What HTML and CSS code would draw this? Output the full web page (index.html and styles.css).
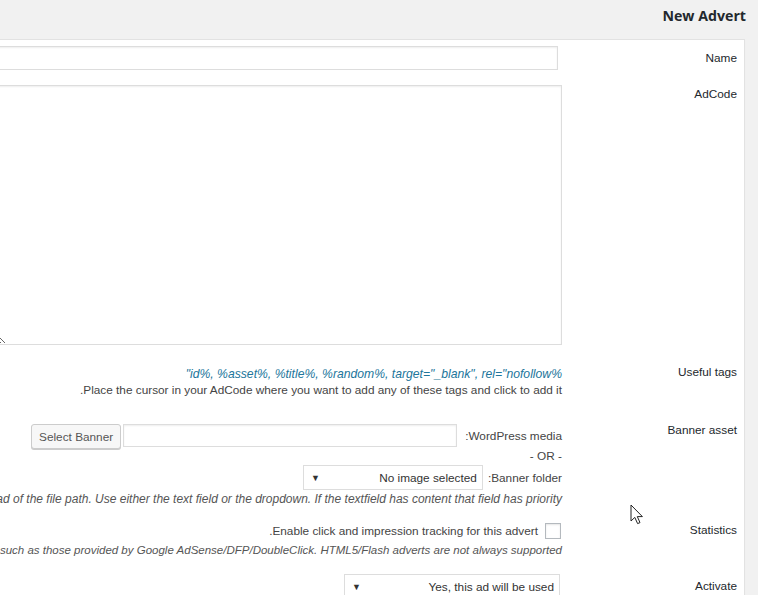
FILE: index.html
```html
<!DOCTYPE html>
<html lang="en" dir="rtl">
<head>
<meta charset="utf-8">
<title>New Advert</title>
<link rel="stylesheet" href="styles.css">
</head>
<body>
<div class="wrap">
  <h2 class="title">New Advert</h2>
  <div class="panel">
    <div class="row row-name">
      <div class="label">Name</div>
      <div class="field"><input class="text name-input" type="text"></div>
    </div>
    <div class="row row-code">
      <div class="label">AdCode</div>
      <div class="field"><textarea class="code"></textarea></div>
    </div>
    <div class="row row-tags">
      <div class="label">Useful tags</div>
      <div class="field">
        <div class="tags">%id%, %asset%, %title%, %random%, target="_blank", rel="nofollow"</div>
        <div class="line">Place the cursor in your AdCode where you want to add any of these tags and click to add it.</div>
      </div>
    </div>
    <div class="row row-banner">
      <div class="label">Banner asset</div>
      <div class="field">
        <div class="media-line">
          <span class="inline-label">WordPress media:</span>
          <input class="text media-input" type="text">
          <button class="button" type="button">Select Banner</button>
        </div>
        <div class="or">- OR -</div>
        <div class="folder-line">
          <span class="inline-label">Banner folder:</span>
          <div class="select folder-select"><span>No image selected</span><span class="arrow">▼</span></div>
        </div>
        <div class="desc desc-banner">Use %asset% in the adcode instead of the file path. Use either the text field or the dropdown. If the textfield has content that field has priority.</div>
      </div>
    </div>
    <div class="row row-stats">
      <div class="label">Statistics</div>
      <div class="field">
        <div class="check-line"><span class="checkbox"></span><span>Enable click and impression tracking for this advert.</span></div>
        <div class="desc desc-stats">Note: Adverts with their own tracking, such as those provided by Google AdSense/DFP/DoubleClick. HTML5/Flash adverts are not always supported.</div>
      </div>
    </div>
    <div class="row row-active">
      <div class="label">Activate</div>
      <div class="field">
        <div class="select active-select"><span>Yes, this ad will be used</span><span class="arrow">▼</span></div>
      </div>
    </div>
  </div>
</div>
<svg class="cursor" width="14" height="22" viewBox="0 0 14 22"><path d="M1 1 L1 17 L4.8 13.4 L7.6 19.6 L10 18.6 L7.3 12.6 L12.4 12.6 Z" fill="#fff" stroke="#222" stroke-width="1" stroke-linejoin="round"/></svg>
</body>
</html>
```
FILE: styles.css
```css
html, body {
  margin: 0;
  padding: 0;
}
body {
  background: #f1f1f1;
  font-family: "Liberation Sans", Arial, sans-serif;
  font-size: 11.8px;
  color: #444;
  overflow: hidden;
  height: 595px;
  position: relative;
  direction: rtl;
}
.wrap {
  margin-left: -400px;
  margin-right: 13px;
}
.title {
  margin: 0 -1px 0 0;
  height: 39px;
  line-height: 32px;
  font-family: "Open Sans", sans-serif;
  font-weight: 700;
  font-size: 14.2px;
  color: #23282d;
}
.panel {
  background: #fff;
  border: 1px solid #e2e2e2;
  border-bottom: 0;
  box-shadow: 0 1px 1px rgba(0,0,0,.04);
  padding-right: 7px;
  height: 600px;
}
.row {
  display: flex;
  align-items: flex-start;
}
.label {
  width: 175px;
  flex: none;
  color: #23282d;
  line-height: 18px;
}
.field {
  flex: 1;
  display: flex;
  flex-direction: column;
  align-items: flex-start;
  min-width: 0;
}
.text {
  box-sizing: border-box;
  border: 1px solid #ddd;
  box-shadow: inset 0 1px 2px rgba(0,0,0,.07);
  background: #fff;
  font: inherit;
  margin: 0;
  padding: 0 4px;
}
.row-name { margin-top: 6px; }
.row-name .label { margin-top: 3px; }
.name-input {
  width: 700px;
  height: 24px;
  margin-right: 4px;
}
.row-code { margin-top: 15px; }
.row-code .label { margin-top: 0; }
.code {
  box-sizing: border-box;
  width: 566px;
  height: 260px;
  border: 1px solid #ddd;
  box-shadow: inset 0 1px 2px rgba(0,0,0,.07);
  margin: 0;
  padding: 2px 6px;
  font: inherit;
  resize: both;
}
.row-tags { margin-top: 18px; }
.row-tags .field { padding-top: 3px; }
.tags {
  font-style: italic;
  font-size: 12.2px;
  color: #21759b;
  line-height: 17px;
  white-space: nowrap;
}
.line {
  line-height: 17px;
  margin-top: -1px;
  white-space: nowrap;
}
.row-banner { margin-top: 22px; }
.row-banner .label { margin-top: 0; }
.row-banner .field { padding-top: 1px; }
.media-line, .folder-line, .check-line {
  display: flex;
  align-items: center;
  gap: 5px;
}
.media-line { gap: 0; }
.media-line .inline-label { margin-left: 8px; }
.media-input {
  width: 334px;
  height: 23px;
  margin-left: 2px;
}
.button {
  box-sizing: border-box;
  height: 25px;
  margin-top: 2px;
  padding: 0 7px;
  font: inherit;
  color: #555;
  background: #f7f7f7;
  border: 1px solid #ccc;
  border-radius: 3px;
  box-shadow: 0 1px 0 #ccc;
}
.or {
  line-height: 14px;
  margin-top: 0;
}
.folder-line { margin-top: 2px; }
.select {
  box-sizing: border-box;
  height: 25px;
  border: 1px solid #ddd;
  background: #fff;
  display: flex;
  align-items: center;
  justify-content: space-between;
  padding: 0 5px 0 7px;
  color: #333;
}
.arrow {
  font-size: 9px;
  color: #333;
}
.folder-select { width: 180px; }
.desc {
  font-style: italic;
  color: #555;
  line-height: 16px;
  white-space: nowrap;
}
.desc-banner {
  font-size: 12px;
  margin-top: 1px;
}
.desc-stats {
  font-size: 11.5px;
  line-height: 18px;
}
.row-stats { margin-top: 14px; }
.check-line { height: 20px; gap: 7px; }
.checkbox {
  box-sizing: border-box;
  width: 16px;
  height: 16px;
  border: 1px solid #b4b9be;
  background: #fff;
  box-shadow: inset 0 1px 2px rgba(0,0,0,.1);
  margin-right: 1px;
}
.row-active { margin-top: 15px; }
.row-active .label { margin-top: 3px; }
.active-select { width: 216px; margin-right: 2px; }
.cursor {
  position: absolute;
  left: 630px;
  top: 504px;
}
```
